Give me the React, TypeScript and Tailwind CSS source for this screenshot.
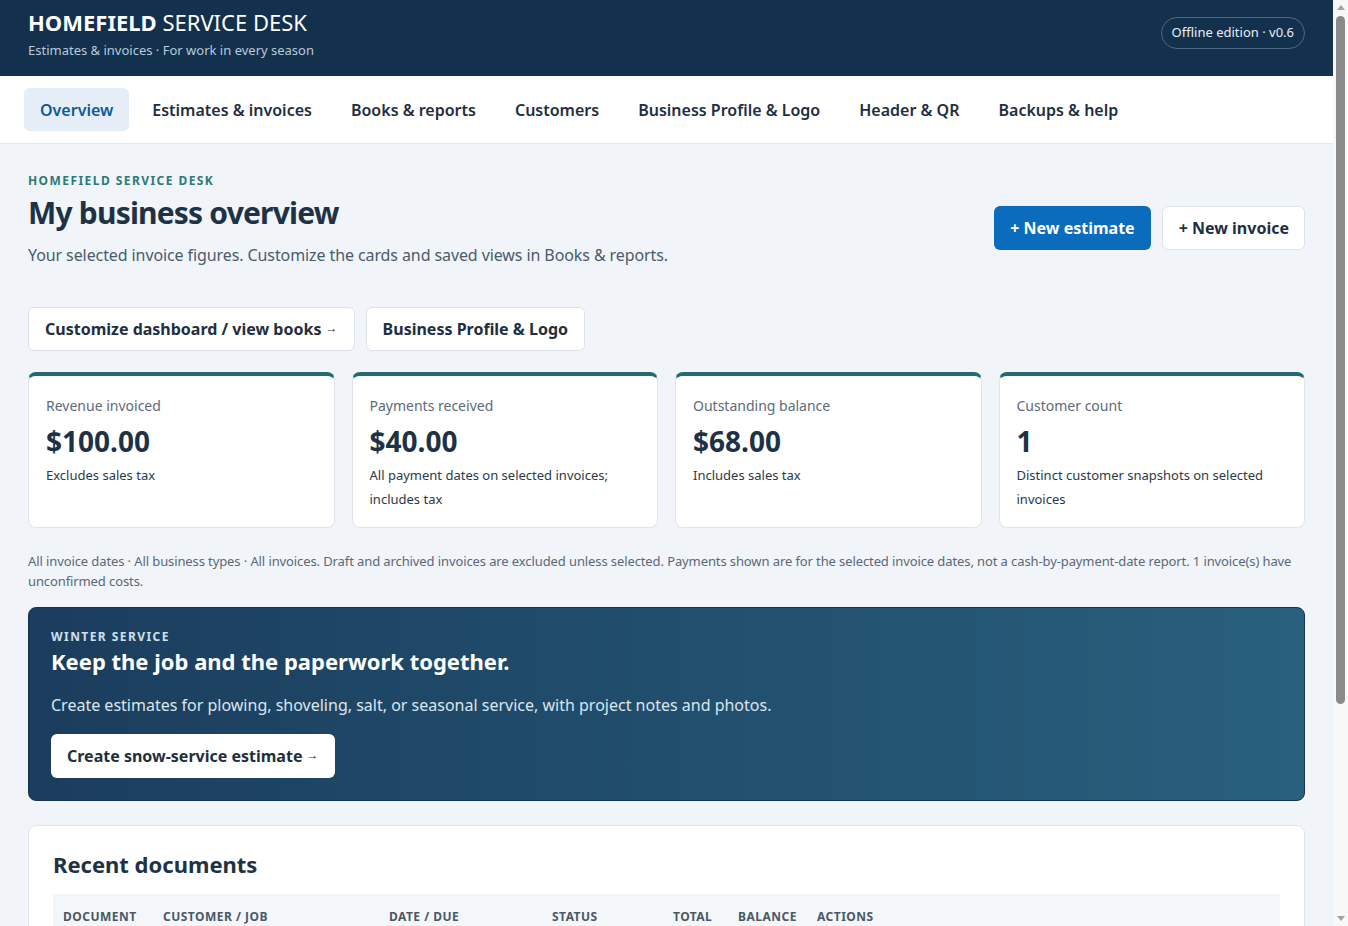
import React from "react";

const font = { fontFamily: '"Noto Sans", "Open Sans", sans-serif' };

const tabs = [
  "Overview",
  "Estimates & invoices",
  "Books & reports",
  "Customers",
  "Business Profile & Logo",
  "Header & QR",
  "Backups & help",
];

const cards = [
  { label: "Revenue invoiced", value: "$100.00", note: "Excludes sales tax" },
  { label: "Payments received", value: "$40.00", note: "All payment dates on selected invoices; includes tax" },
  { label: "Outstanding balance", value: "$68.00", note: "Includes sales tax" },
  { label: "Customer count", value: "1", note: "Distinct customer snapshots on selected invoices" },
];

const rows = [
  { doc: "INV-0001", cust: "Maple Street HOA", job: "Driveway plowing", date: "Jan 12, 2025", due: "Feb 11, 2025", status: "Partially paid", total: "$108.00", bal: "$68.00" },
  { doc: "EST-0002", cust: "Maple Street HOA", job: "Salt & walkways", date: "Jan 05, 2025", due: "—", status: "Sent", total: "$240.00", bal: "—" },
  { doc: "EST-0001", cust: "R. Alvarez", job: "Seasonal contract", date: "Dec 28, 2024", due: "—", status: "Draft", total: "$650.00", bal: "—" },
];

function Arrow() {
  return <span className="inline-block text-[12px] font-normal relative top-[-3px]">→</span>;
}

function Scrollbar() {
  return (
    <div className="w-[15px] h-screen bg-[#f8f8f8] flex flex-col items-center shrink-0">
      <div className="h-[15px] flex items-center justify-center">
        <svg width="8" height="5" viewBox="0 0 8 5"><path d="M0 5 L4 0 L8 5 Z" fill="#a3a3a3" /></svg>
      </div>
      <div className="w-[9px] h-[688px] rounded-full bg-[#8a8a8a] mt-[1px]" />
      <div className="flex-1" />
      <div className="h-[15px] flex items-center justify-center">
        <svg width="8" height="5" viewBox="0 0 8 5"><path d="M0 0 L8 0 L4 5 Z" fill="#a3a3a3" /></svg>
      </div>
    </div>
  );
}

const th = "px-[10px] pt-[14px] pb-[8px] font-bold";

export default function App() {
  return (
    <div style={font} className="flex h-screen overflow-hidden bg-[#f1f5f9] text-[#1e3246]">
      <div className="flex-1 min-w-0 h-screen overflow-hidden">
        <header className="h-[76px] bg-[#13304d] px-7 flex items-start justify-between">
          <div className="pt-[7px]">
            <div className="text-[22px] leading-[30px] text-white">
              <span className="font-bold">HOMEFIELD</span> SERVICE DESK
            </div>
            <div className="text-[13px] leading-[18px] text-[#b9cadb] mt-[4px]">
              Estimates &amp; invoices · For work in every season
            </div>
          </div>
          <div className="mt-[17px] h-[32px] px-[10px] flex items-center rounded-full border border-[#4d6882] text-[13px] text-[#e6eef5]">
            Offline edition · v0.6
          </div>
        </header>

        <nav className="h-[68px] bg-white border-b border-[#e3e8ee] px-6 flex items-center gap-[7px]">
          {tabs.map((t, i) => (
            <div
              key={t}
              className={
                i === 0
                  ? "h-[43px] px-4 flex items-center rounded-md bg-[#e5eef6] text-[#0b5b9a] text-[16px] font-semibold"
                  : "h-[43px] px-4 flex items-center rounded-md text-[#1f2f40] text-[16px] font-semibold"
              }
            >
              {t}
            </div>
          ))}
        </nav>

        <main className="px-7 pt-[29px] pb-10">
          <div className="flex justify-between items-start">
            <div>
              <div className="text-[12px] leading-[16px] font-bold tracking-[0.12em] text-[#2b7a78]">
                HOMEFIELD SERVICE DESK
              </div>
              <h1 className="text-[30px] leading-[36px] font-bold text-[#1e3246] mt-[6px] tracking-[-0.027em]">
                My business overview
              </h1>
              <p className="text-[16px] leading-[24px] text-[#4b5b6c] mt-3 tracking-[-0.006em]">
                Your selected invoice figures. Customize the cards and saved views in Books &amp; reports.
              </p>
            </div>
            <div className="flex gap-[11px] mt-[33px]">
              <button className="h-[44px] px-4 rounded-md bg-[#0b6bbd] text-white text-[16px] font-bold">
                + New estimate
              </button>
              <button className="h-[44px] pl-4 pr-[15px] rounded-md bg-white border border-[#dbe2ea] text-[#1f2f40] text-[16px] font-bold">
                + New invoice
              </button>
            </div>
          </div>

          <div className="flex gap-[11px] mt-10">
            <button className="h-[44px] px-4 rounded-md bg-white border border-[#dbe2ea] text-[#1f2f40] text-[16px] font-bold">
              Customize dashboard / view books <Arrow />
            </button>
            <button className="h-[44px] px-4 rounded-md bg-white border border-[#dbe2ea] text-[#1f2f40] text-[16px] font-bold">
              Business Profile &amp; Logo
            </button>
          </div>

          <div className="grid grid-cols-4 gap-[17px] mt-[21px]">
            {cards.map((c) => (
              <div
                key={c.label}
                className="bg-white rounded-lg border border-[#dfe5ec] border-t-4 border-t-[#236b6c] px-[17px] pt-5 pb-4 min-h-[156px]"
              >
                <div className="text-[14px] leading-[20px] text-[#5c6b7a]">{c.label}</div>
                <div className="text-[28px] leading-[36px] font-bold text-[#1e3246] mt-[7px]">{c.value}</div>
                <div className="text-[13px] leading-[24px] text-[#2a3a4a] mt-1">{c.note}</div>
              </div>
            ))}
          </div>

          <p className="text-[13px] leading-[20px] text-[#5a6878] mt-[23px] tracking-[-0.008em]">
            All invoice dates · All business types · All invoices. Draft and archived invoices are excluded unless selected. Payments shown are for the selected invoice dates, not a cash-by-payment-date report. 1 invoice(s) have unconfirmed costs.
          </p>

          <section className="mt-4 rounded-lg bg-gradient-to-r from-[#1b3d5d] to-[#28607d] px-[22px] pt-[21px] pb-[22px] border border-[#16344f]">
            <div className="text-[12px] leading-[16px] font-bold tracking-[0.12em] text-[#cfe0ee]">WINTER SERVICE</div>
            <h2 className="text-[22px] leading-[28px] font-bold text-white mt-[2px]">
              Keep the job and the paperwork together.
            </h2>
            <p className="text-[16px] leading-[24px] text-[#dbe6ef] mt-[18px]">
              Create estimates for plowing, shoveling, salt, or seasonal service, with project notes and photos.
            </p>
            <button className="mt-[17px] h-[44px] px-4 rounded-md bg-white text-[#1f2f40] text-[16px] font-bold">
              Create snow-service estimate <Arrow />
            </button>
          </section>

          <section className="mt-6 bg-white rounded-lg border border-[#dfe5ec] px-6 pt-[24px] pb-6">
            <h2 className="text-[22px] leading-[28px] font-bold text-[#1e3246]">Recent documents</h2>
            <table className="w-full table-fixed mt-4 text-left border-collapse">
              <thead>
                <tr className="bg-[#f4f7fa] text-[12px] tracking-[0.04em] text-[#4a5868]">
                  <th className={`${th} w-[100px]`}>DOCUMENT</th>
                  <th className={`${th} w-[226px]`}>CUSTOMER / JOB</th>
                  <th className={`${th} w-[163px]`}>DATE / DUE</th>
                  <th className={`${th} w-[121px]`}>STATUS</th>
                  <th className={`${th} w-[65px]`}>TOTAL</th>
                  <th className={`${th} w-[79px]`}>BALANCE</th>
                  <th className={th}>ACTIONS</th>
                </tr>
              </thead>
              <tbody className="text-[14px] text-[#1f2f40]">
                {rows.map((r) => (
                  <tr key={r.doc} className="border-b border-[#e6ebf0]">
                    <td className="px-[10px] py-3 font-semibold">{r.doc}</td>
                    <td className="px-[10px] py-3">
                      <div>{r.cust}</div>
                      <div className="text-[12px] text-[#5c6b7a]">{r.job}</div>
                    </td>
                    <td className="px-[10px] py-3">
                      <div>{r.date}</div>
                      <div className="text-[12px] text-[#5c6b7a]">{r.due}</div>
                    </td>
                    <td className="px-[10px] py-3">
                      <span className="px-2 py-[2px] rounded-full bg-[#e5eef6] text-[#0b5b9a] text-[12px] font-semibold">{r.status}</span>
                    </td>
                    <td className="px-[10px] py-3">{r.total}</td>
                    <td className="px-[10px] py-3">{r.bal}</td>
                    <td className="px-[10px] py-3">
                      <span className="text-[#0b6bbd] font-semibold">Open</span>
                    </td>
                  </tr>
                ))}
              </tbody>
            </table>
          </section>
        </main>
      </div>
      <Scrollbar />
    </div>
  );
}
